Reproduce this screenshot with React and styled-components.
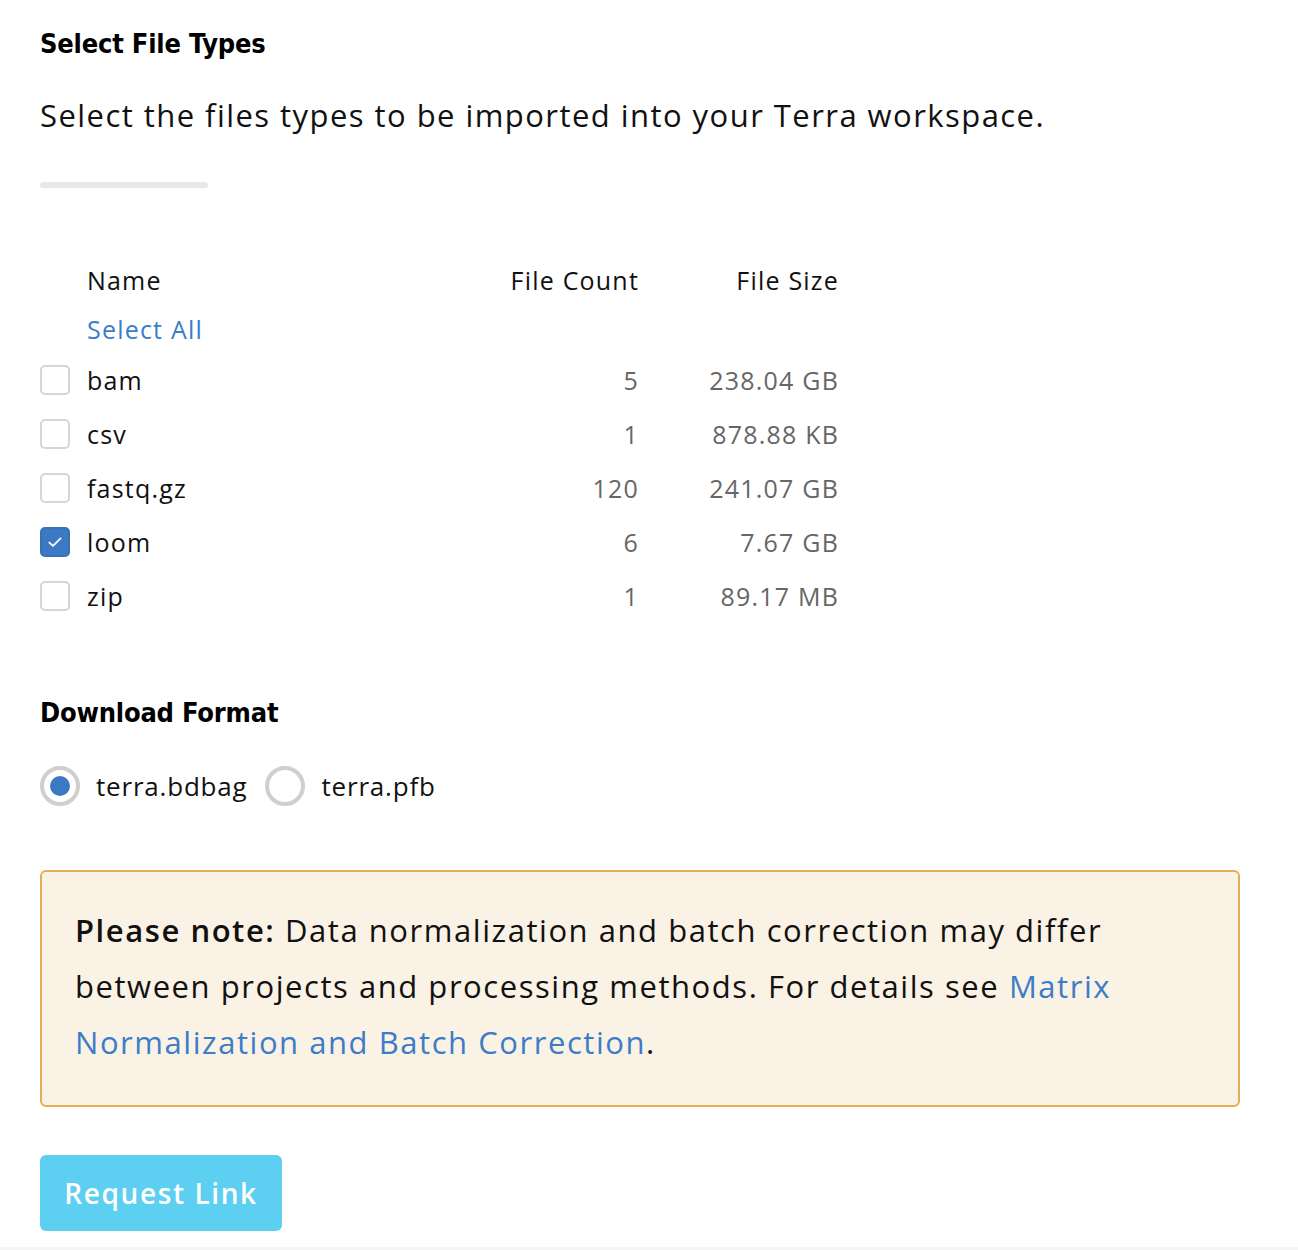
import React, { useState } from "react";
import styled, { createGlobalStyle } from "styled-components";

const Global = createGlobalStyle`
  html, body { margin: 0; padding: 0; background: #ffffff; }
  body { font-family: "Open Sans", "Noto Sans", sans-serif; color: #111; }
  * { box-sizing: border-box; }
`;

const Page = styled.div`
  display: flex;
  flex-direction: column;
  min-height: 1250px;
`;

const Content = styled.main`
  display: flex;
  flex-direction: column;
  padding: 27px 40px 16px 40px;
`;

const Heading = styled.h2`
  margin: 0;
  font-family: "DejaVu Sans Condensed", "Roboto Condensed", Roboto, sans-serif;
  font-stretch: condensed;
  font-weight: 700;
  font-size: 27px;
  line-height: 34px;
  color: #000;
  letter-spacing: -0.2px;
`;

const Description = styled.p`
  margin: 34px 0 0 0;
  font-size: 31px;
  line-height: 40px;
  color: #111;
  letter-spacing: 1.45px;
`;

const Bar = styled.div`
  margin-top: 47px;
  width: 168px;
  height: 6px;
  border-radius: 3px;
  background: #e8e8e8;
`;

const Table = styled.div`
  margin-top: 67px;
  display: grid;
  grid-template-columns: 47px 352px 200px 200px;
  align-items: center;
  font-size: 25px;
  letter-spacing: 1.2px;
`;

const Row = styled.div`
  display: contents;
`;

const Cell = styled.div`
  height: ${(p) => p.$h || 54}px;
  display: flex;
  align-items: center;
  justify-content: ${(p) => (p.$right ? "flex-end" : "flex-start")};
  color: ${(p) => p.$color || "#111"};
`;

const HeadCell = styled(Cell)`
  font-weight: 500;
  color: #111;
`;

const LinkText = styled.span`
  color: #3b7dc8;
  cursor: pointer;
`;

const Box = styled.span`
  width: 30px;
  height: 30px;
  border-radius: 5px;
  border: 2px solid ${(p) => (p.$checked ? "#3672b4" : "#d6d6d6")};
  background: ${(p) => (p.$checked ? "#3b79c3" : "#fff")};
  display: flex;
  align-items: center;
  justify-content: center;
  cursor: pointer;
`;

const SubHeading = styled(Heading)`
  margin-top: 73px;
`;

const RadioGroup = styled.div`
  margin-top: 36px;
  display: flex;
  align-items: center;
  gap: 18px;
`;

const RadioOption = styled.label`
  display: flex;
  align-items: center;
  gap: 16px;
  font-size: 26px;
  letter-spacing: 0.8px;
  color: #111;
  cursor: pointer;
`;

const RadioCircle = styled.span`
  width: 40px;
  height: 40px;
  border-radius: 50%;
  border: 4px solid #cfcfcf;
  display: flex;
  align-items: center;
  justify-content: center;
  &::after {
    content: "";
    width: 20px;
    height: 20px;
    border-radius: 50%;
    background: ${(p) => (p.$on ? "#3b79c3" : "transparent")};
  }
`;

const Note = styled.div`
  margin-top: 64px;
  width: 1200px;
  background: #faf2e5;
  border: 2px solid #e2ae57;
  border-radius: 6px;
  padding: 30px 33px 35px 33px;
  font-size: 31px;
  line-height: 56px;
  letter-spacing: 1.55px;
  color: #111;
`;

const Strong = styled.strong`
  font-weight: 600;
`;

const NoteLink = styled.a`
  color: #3b7dc8;
  text-decoration: none;
`;

const Button = styled.button`
  margin-top: 48px;
  align-self: flex-start;
  width: 242px;
  height: 76px;
  border: none;
  border-radius: 6px;
  background: #5dcff0;
  color: #fff;
  font-family: "Open Sans", sans-serif;
  font-weight: 600;
  font-size: 28px;
  letter-spacing: 1.6px;
  cursor: pointer;
`;

const Footer = styled.footer`
  flex: 1;
  background: #f5f5f5;
`;

const rows = [
  { name: "bam", count: "5", size: "238.04 GB" },
  { name: "csv", count: "1", size: "878.88 KB" },
  { name: "fastq.gz", count: "120", size: "241.07 GB" },
  { name: "loom", count: "6", size: "7.67 GB" },
  { name: "zip", count: "1", size: "89.17 MB" },
];

const Check = () => (
  <svg width="18" height="18" viewBox="0 0 16 16" fill="none">
    <path d="M3 8.5l3.2 3L13 4.8" stroke="#fff" strokeWidth="1.6" strokeLinecap="round" strokeLinejoin="round" />
  </svg>
);

export default function App() {
  const [checked, setChecked] = useState({ loom: true });
  const [format, setFormat] = useState("bdbag");
  return (
    <Page>
      <Global />
      <Content>
        <Heading>Select File Types</Heading>
        <Description>Select the files types to be imported into your Terra workspace.</Description>
        <Bar />
        <Table>
          <Row>
            <HeadCell $h={50} />
            <HeadCell $h={50}>Name</HeadCell>
            <HeadCell $h={50} $right>File Count</HeadCell>
            <HeadCell $h={50} $right>File Size</HeadCell>
          </Row>
          <Row>
            <Cell $h={48} />
            <Cell $h={48}><LinkText>Select All</LinkText></Cell>
            <Cell $h={48} />
            <Cell $h={48} />
          </Row>
          {rows.map((r) => (
            <Row key={r.name}>
              <Cell>
                <Box
                  $checked={!!checked[r.name]}
                  onClick={() => setChecked((c) => ({ ...c, [r.name]: !c[r.name] }))}
                >
                  {checked[r.name] && <Check />}
                </Box>
              </Cell>
              <Cell>{r.name}</Cell>
              <Cell $right $color="#666">{r.count}</Cell>
              <Cell $right $color="#666">{r.size}</Cell>
            </Row>
          ))}
        </Table>
        <SubHeading>Download Format</SubHeading>
        <RadioGroup>
          <RadioOption onClick={() => setFormat("bdbag")}>
            <RadioCircle $on={format === "bdbag"} />
            terra.bdbag
          </RadioOption>
          <RadioOption onClick={() => setFormat("pfb")}>
            <RadioCircle $on={format === "pfb"} />
            terra.pfb
          </RadioOption>
        </RadioGroup>
        <Note>
          <Strong>Please note:</Strong> Data normalization and batch correction may differ between projects and processing methods. For details see{" "}
          <NoteLink href="#">Matrix Normalization and Batch Correction</NoteLink>.
        </Note>
        <Button>Request Link</Button>
      </Content>
      <Footer />
    </Page>
  );
}
